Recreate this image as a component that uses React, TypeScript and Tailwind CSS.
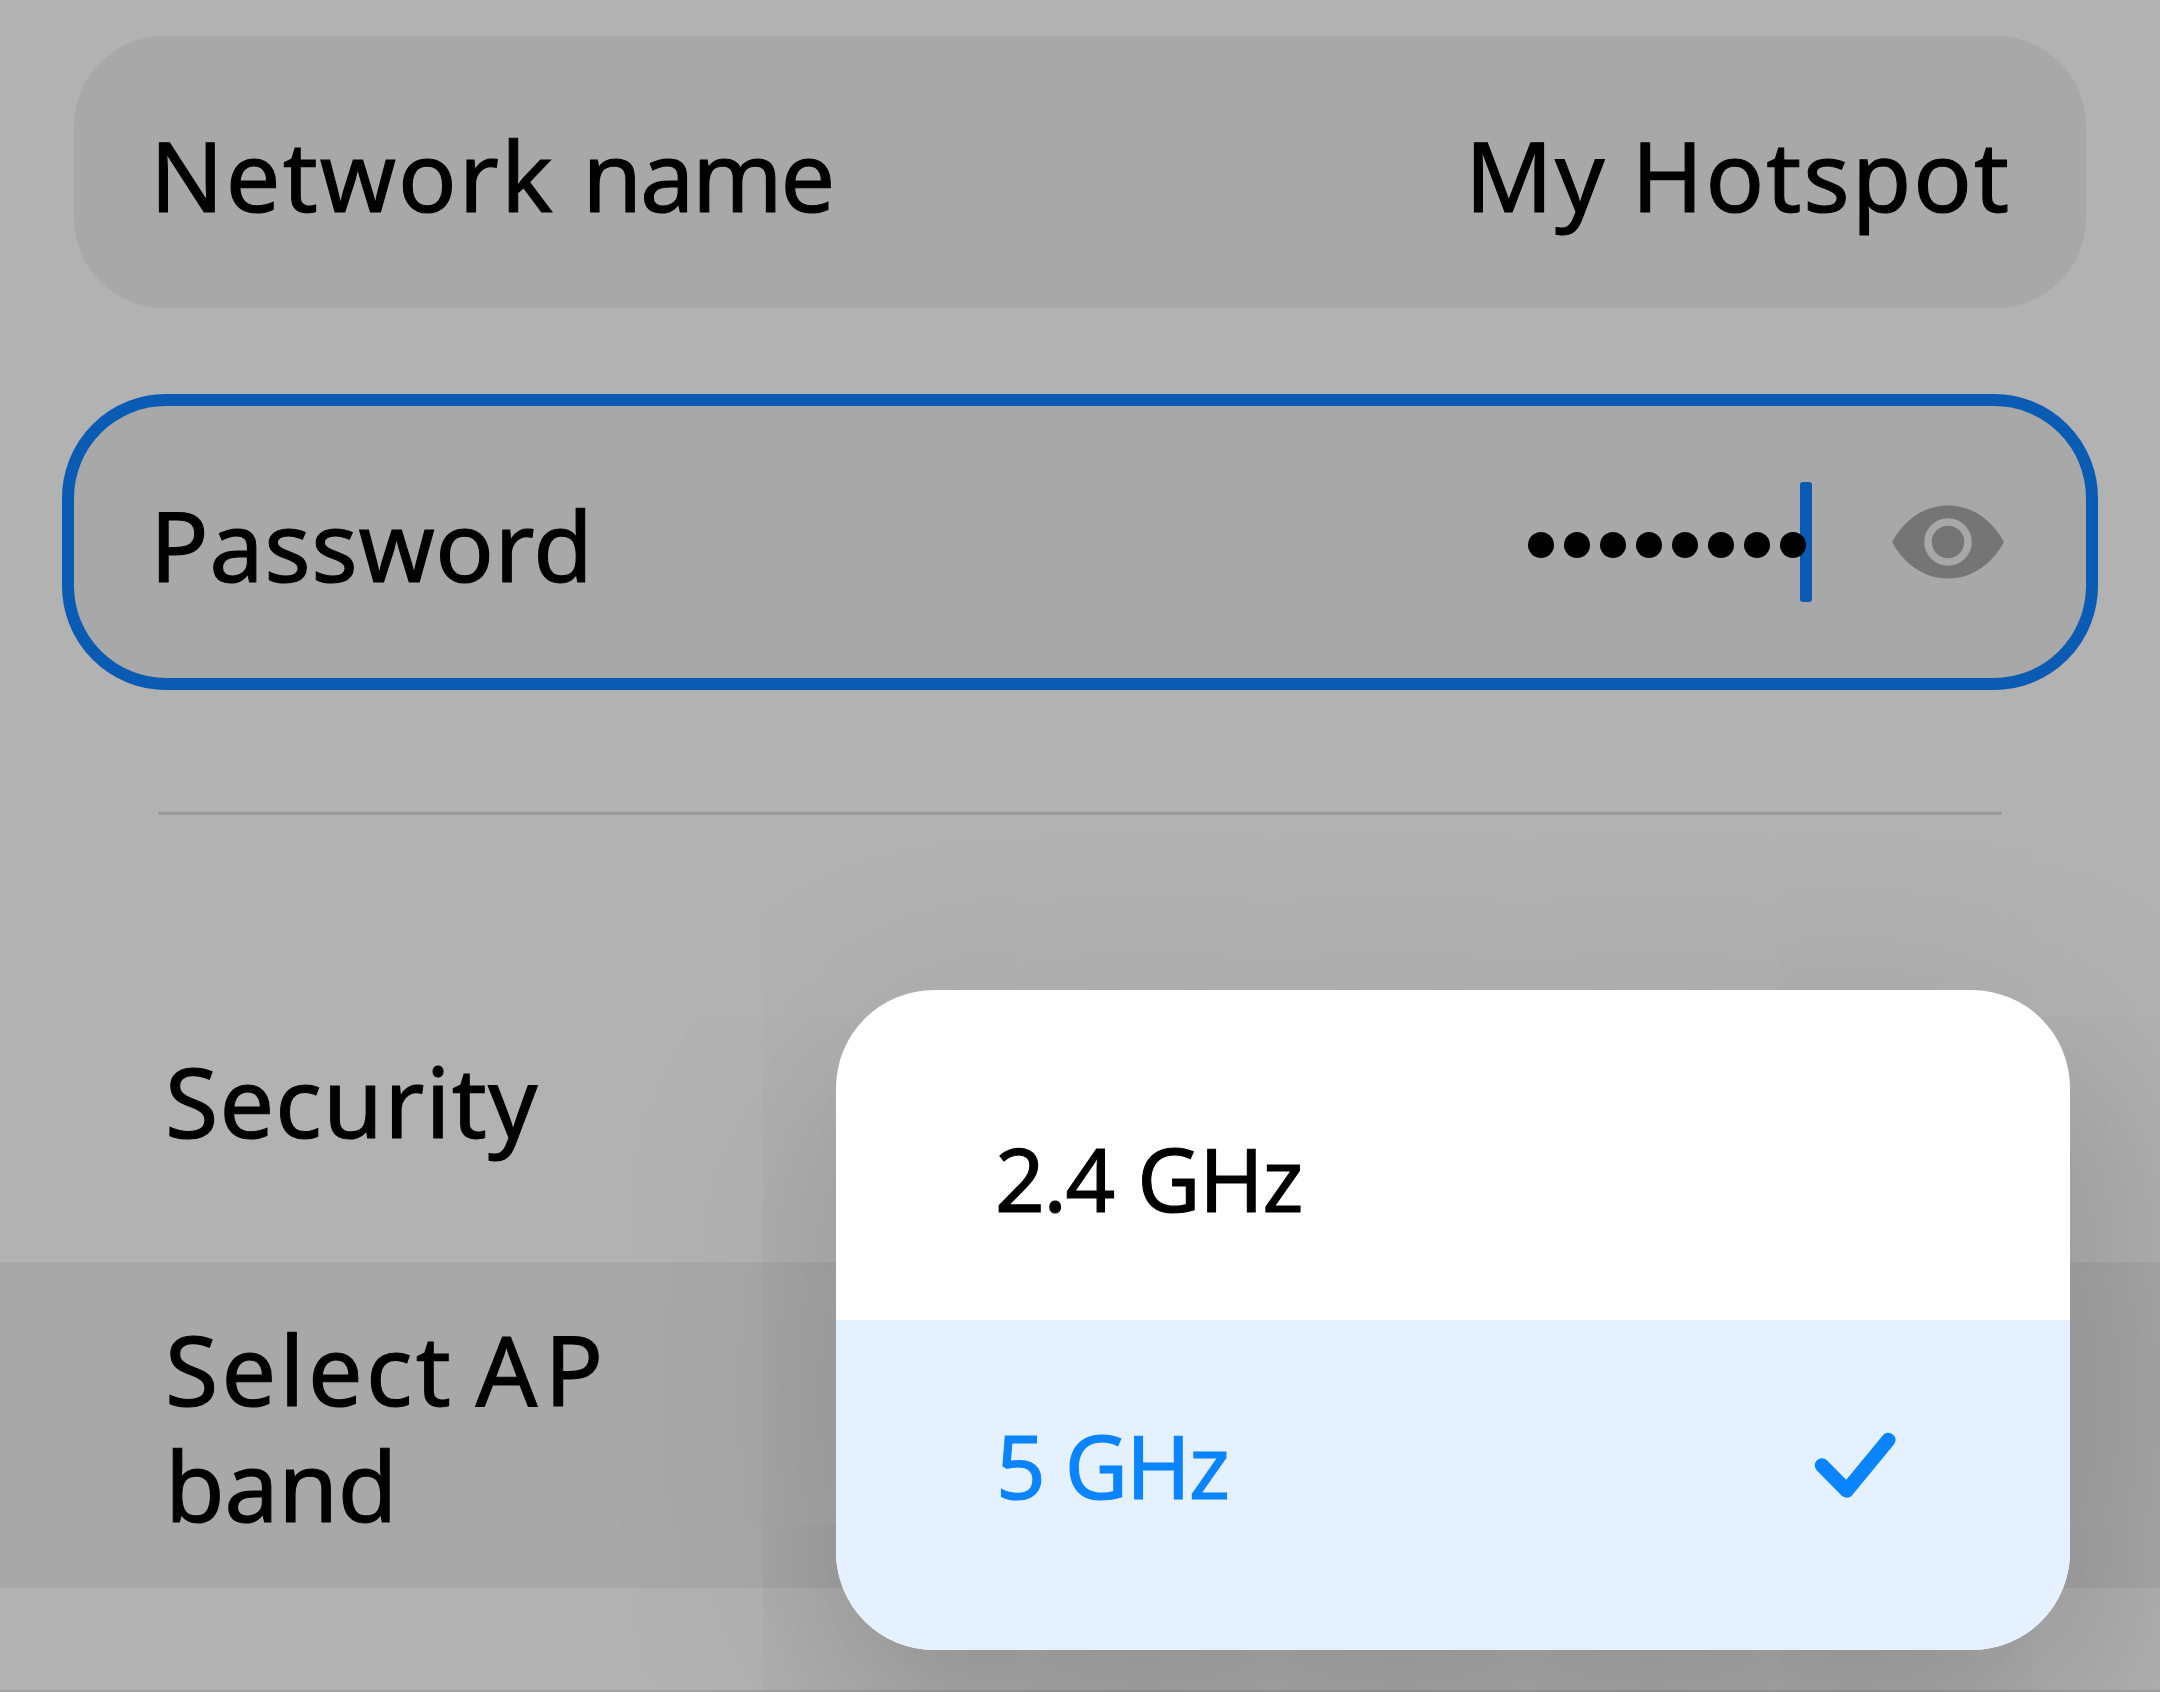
import React from "react";

const labelText = "text-[97px] leading-[116px] whitespace-nowrap";

function EyeIcon() {
  return (
    <svg className="h-[74px] w-[112px] shrink-0" viewBox="0 0 112 74">
      <path d="M0 37C12 15 32 .5 56 .5s44 14.500 56 36.500C100 59 80 73.500 56 73.500S12 59 0 37Z" fill="#757575" />
      <circle cx="56" cy="37" r="20" fill="none" stroke="#a8a8a8" strokeWidth="7.5" />
    </svg>
  );
}

function CheckIcon() {
  return (
    <svg className="h-[66px] w-[82px] shrink-0" viewBox="0 0 82 66">
      <path
        d="M8 33.5 32.7 58.5 74.3 8"
        fill="none"
        stroke="#0a84ff"
        strokeWidth="14.5"
        strokeLinecap="round"
        strokeLinejoin="round"
      />
    </svg>
  );
}

function PasswordDots() {
  return (
    <div className="flex h-[120px] items-center">
      <div className="relative z-10 mt-[6px] flex gap-[10px]">
        {Array.from({ length: 8 }, (_, i) => (
          <span key={i} className="size-[26px] rounded-full bg-black" />
        ))}
      </div>
      <span className="-ml-[6px] h-[120px] w-[12px] rounded-[3px] bg-[#0a5bb3]" />
    </div>
  );
}

export default function App() {
  return (
    <div className="relative flex h-[1692px] w-[2160px] flex-col overflow-hidden bg-[#b2b2b2] font-['Noto_Sans',sans-serif] text-black [-webkit-text-stroke:1.1px_currentColor]">
      <div className="mx-[74px] mt-9 flex h-[272px] shrink-0 items-center justify-between rounded-[90px] bg-[#a8a8a8] pt-[3px] pr-[75px] pl-[76px]">
        <span className={labelText}>
          <span className="tracking-[2.1px]">Network </span>
          <span className="tracking-[-2.3px]">name</span>
        </span>
        <span className={`${labelText} tracking-[2px] [word-spacing:-2px]`}>My Hotspot</span>
      </div>

      <div className="mx-[62px] mt-[86px] flex h-[296px] shrink-0 items-center justify-between rounded-[104px] border-[12px] border-[#0a5bb3] bg-[#a8a8a8] pr-[82px] pl-[76px]">
        <span className={`${labelText} mt-[3px] tracking-[0.6px]`}>Password</span>
        <div className="flex items-center gap-[80px]">
          <PasswordDots />
          <EyeIcon />
        </div>
      </div>

      <div className="mx-[158px] mt-[122px] h-[3px] shrink-0 bg-[#999999]" />

      <div className="mt-[123px] flex h-[324px] shrink-0 items-center pl-[165px]">
        <span className={`${labelText} tracking-[1.2px]`}>Security</span>
      </div>

      <div className="flex h-[326px] shrink-0 items-center bg-[#a8a8a8] pt-px pl-[165px]">
        <p className={labelText}>
          <span className="tracking-[3.300px] [word-spacing:-7px]">Select </span>
          <span className="tracking-[7px]">AP</span>
          <br />
          <span className="tracking-[-0.4px]">band</span>
        </p>
      </div>

      <div className="mt-auto h-[2px] shrink-0 bg-[#a0a0a0]" />

      <div className="absolute top-[990px] left-[836px] flex h-[660px] w-[1234px] flex-col overflow-hidden rounded-[98px] bg-white text-[87px] leading-[104px] shadow-[10px_72px_225px_-5px_rgba(0,0,0,0.25)]">
        <div className="flex h-[330px] items-center pt-[46px] pl-[159px]">
          <span className="tracking-[-1.300px] [word-spacing:2px]">2.4 GHz</span>
        </div>
        <div className="flex h-[330px] items-center justify-between bg-[#e5f1ff] pr-[174px] pb-[41px] pl-[160px] text-[#0a84ff]">
          <span className="tracking-[-1.8px]">5 GHz</span>
          <CheckIcon />
        </div>
      </div>
    </div>
  );
}
